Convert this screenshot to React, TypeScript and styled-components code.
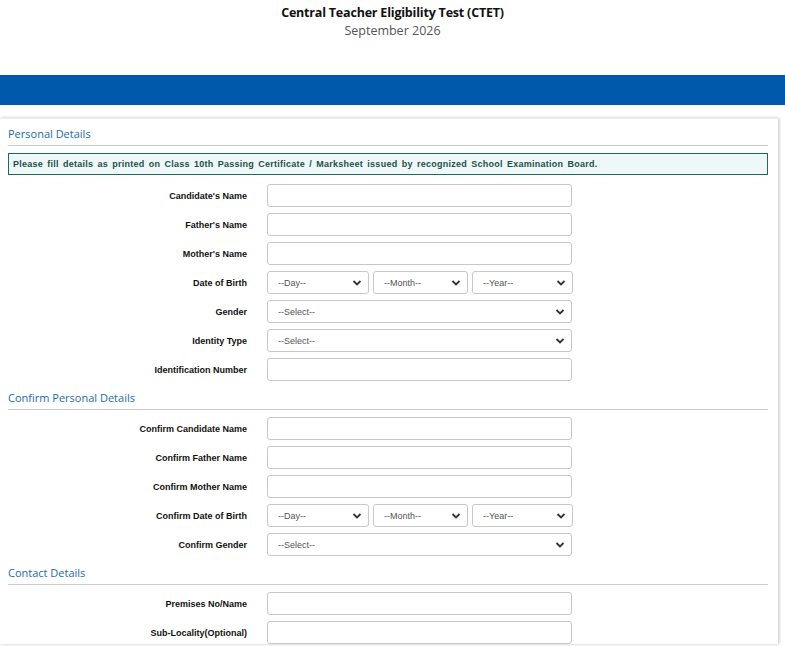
import React from "react";
import styled, { createGlobalStyle } from "styled-components";

const Global = createGlobalStyle`
  html, body { margin: 0; padding: 0; background: #fff; overflow: hidden; }
  body { font-family: "Liberation Sans", Arial, sans-serif; }
`;

const Header = styled.header`
  text-align: center;
  padding-top: 4px;
  height: 75px;
  box-sizing: border-box;
  font-family: "Open Sans", sans-serif;
`;
const Title = styled.div`
  font-weight: 700;
  font-size: 12.5px;
  color: #111;
  line-height: 17px;
  letter-spacing: -0.2px;
`;
const Sub = styled.div`
  font-size: 12.5px;
  color: #555;
  line-height: 20px;
`;
const Bar = styled.div`
  height: 30px;
  background: #0059ab;
  margin-bottom: 13px;
`;
const Card = styled.div`
  width: 778px;
  box-sizing: border-box;
  padding: 0 10px 0 8px;
  box-shadow: 1px 0 3px rgba(0, 0, 0, 0.25);
  border-top: 1px solid #eee;
`;
const SectionTitle = styled.div`
  font-family: "Open Sans", sans-serif;
  font-size: 11px;
  color: #1b6bb0;
  padding: 7px 0 4px;
  border-bottom: 1px solid #ccc;
  margin-bottom: 7px;
`;
const Notice = styled.div`
  border: 1px solid #1f6b5a;
  background: #eef8f8;
  color: #1f4f49;
  font-weight: 700;
  font-size: 9px;
  letter-spacing: 0.25px;
  word-spacing: 1.5px;
  padding: 5px 4px;
  margin-bottom: 9px;
`;
const Row = styled.div`
  display: grid;
  grid-template-columns: 239px 305px;
  column-gap: 20px;
  align-items: center;
  height: 23px;
  margin-bottom: 6px;
  &:last-child { margin-bottom: 2px; }
`;
const Label = styled.label`
  text-align: right;
  font-weight: 700;
  font-size: 9px;
  color: #111;
`;
const Input = styled.input`
  box-sizing: border-box;
  height: 23px;
  width: 100%;
  border: 1px solid #c8c8c8;
  border-radius: 3px;
  margin: 0;
`;
const Triple = styled.div`
  display: grid;
  grid-template-columns: 102px 95px 101px;
  column-gap: 4px;
`;
const SelWrap = styled.div`
  position: relative;
  height: 23px;
  box-sizing: border-box;
  border: 1px solid #c8c8c8;
  border-radius: 3px;
  display: flex;
  align-items: center;
  padding-left: 10px;
  font-size: 9px;
  color: #555;
`;
const Chev = styled.svg`
  position: absolute;
  right: 6px;
  top: 7px;
`;
const Group = styled.div``;

const Select = ({ text }: { text: string }) => (
  <SelWrap>
    {text}
    <Chev width="10" height="8" viewBox="0 0 10 8">
      <path d="M1.5 2 L5 5.5 L8.5 2" stroke="#333" strokeWidth="1.8" fill="none" />
    </Chev>
  </SelWrap>
);

const DateSel = () => (
  <Triple>
    <Select text="--Day--" />
    <Select text="--Month--" />
    <Select text="--Year--" />
  </Triple>
);

type F = [string, "i" | "s" | "d"];
const Fields = ({ f }: { f: F[] }) => (
  <Group>
    {f.map(([l, t]) => (
      <Row key={l}>
        <Label>{l}</Label>
        {t === "i" ? <Input /> : t === "s" ? <Select text="--Select--" /> : <DateSel />}
      </Row>
    ))}
  </Group>
);

export default function App() {
  return (
    <>
      <Global />
      <Header>
        <Title>Central Teacher Eligibility Test (CTET)</Title>
        <Sub>September 2026</Sub>
      </Header>
      <Bar />
      <Card>
        <SectionTitle>Personal Details</SectionTitle>
        <Notice>
          Please fill details as printed on Class 10th Passing Certificate / Marksheet issued by recognized School Examination Board.
        </Notice>
        <Fields
          f={[
            ["Candidate's Name", "i"],
            ["Father's Name", "i"],
            ["Mother's Name", "i"],
            ["Date of Birth", "d"],
            ["Gender", "s"],
            ["Identity Type", "s"],
            ["Identification Number", "i"],
          ]}
        />
        <SectionTitle>Confirm Personal Details</SectionTitle>
        <Fields
          f={[
            ["Confirm Candidate Name", "i"],
            ["Confirm Father Name", "i"],
            ["Confirm Mother Name", "i"],
            ["Confirm Date of Birth", "d"],
            ["Confirm Gender", "s"],
          ]}
        />
        <SectionTitle>Contact Details</SectionTitle>
        <Fields
          f={[
            ["Premises No/Name", "i"],
            ["Sub-Locality(Optional)", "i"],
          ]}
        />
      </Card>
    </>
  );
}
